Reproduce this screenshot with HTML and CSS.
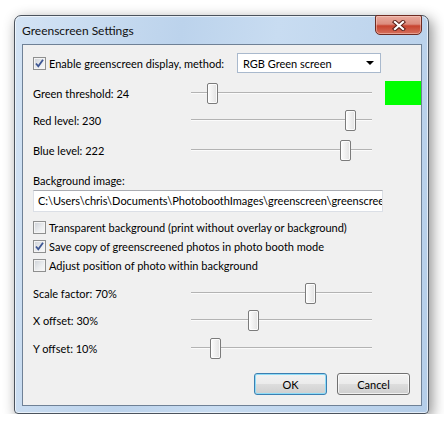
FILE: index.html
```html
<!DOCTYPE html>
<html lang="en">
<head>
    <meta charset="UTF-8">
    <title>Greenscreen Settings</title>
    <link rel="stylesheet" href="styles.css">
</head>
<body>

    <div class="window">
        <div class="titlebar">
            <span class="title">Greenscreen Settings</span>
            <span class="close-btn">
                <svg width="14" height="11" viewBox="0 0 14 11">
                    <path d="M3 2 L11 9 M11 2 L3 9" stroke="#5a2019" stroke-width="4.2" stroke-linecap="square" fill="none"/>
                    <path d="M3 2 L11 9 M11 2 L3 9" stroke="#ffffff" stroke-width="2.2" stroke-linecap="square" fill="none"/>
                </svg>
            </span>
        </div>

        <div class="client">
            <div class="method-row">
                <label class="check check-method">
                    <span class="box"><svg width="11" height="11" viewBox="0 0 11 11"><path d="M2 5.5 L4.3 8.3 L9 1.8" stroke="#3d5693" stroke-width="1.8" fill="none"/></svg></span>
                    Enable greenscreen display, method:
                </label>
                <div class="combo">
                    <span>RGB Green screen</span>
                    <span class="arrow"></span>
                </div>
            </div>

            <div class="slider-row row-green">
                <span>Green threshold: 24</span>
                <div class="track"><span class="thumb" style="left:16px"></span></div>
                <span></span>
                <span class="swatch"></span>
            </div>
            <div class="slider-row row-red">
                <span>Red level: 230</span>
                <div class="track"><span class="thumb" style="left:154px"></span></div>
            </div>
            <div class="slider-row row-blue">
                <span>Blue level: 222</span>
                <div class="track"><span class="thumb" style="left:149px"></span></div>
            </div>

            <div class="field-label">Background image:</div>
            <div class="field">C:\Users\chris\Documents\PhotoboothImages\greenscreen\greenscree</div>

            <label class="check check-row first">
                <span class="box"></span>
                Transparent background (print without overlay or background)
            </label>
            <label class="check check-row">
                <span class="box"><svg width="11" height="11" viewBox="0 0 11 11"><path d="M2 5.5 L4.3 8.3 L9 1.8" stroke="#3d5693" stroke-width="1.8" fill="none"/></svg></span>
                Save copy of greenscreened photos in photo booth mode
            </label>
            <label class="check check-row">
                <span class="box"></span>
                Adjust position of photo within background
            </label>

            <div class="slider-row row-scale">
                <span>Scale factor: 70%</span>
                <div class="track"><span class="thumb" style="left:114px"></span></div>
            </div>
            <div class="slider-row row-x">
                <span>X offset: 30%</span>
                <div class="track"><span class="thumb" style="left:57px"></span></div>
            </div>
            <div class="slider-row row-y">
                <span>Y offset: 10%</span>
                <div class="track"><span class="thumb" style="left:19px"></span></div>
            </div>

            <div class="buttons">
                <span class="btn btn-default">OK</span>
                <span class="btn">Cancel</span>
            </div>
        </div>
    </div>

</body>
</html>
```

FILE: styles.css
```css
* {
    box-sizing: border-box;
}
body {
    margin: 0;
    padding: 15px 0 0 14px;
    background: #ffffff;
    font-family: Lato, "Liberation Sans", sans-serif;
    font-size: 11px;
    color: #000;
}
.window {
    width: 415px;
    height: 399px;
    display: flex;
    flex-direction: column;
    padding: 0 6px 7px 7px;
    border: 1px solid #4b535d;
    border-radius: 7px 7px 4px 4px;
    background: linear-gradient(100deg, #d3e3f4 0%, #bcd3ec 35%, #c8dcf1 55%, #b5cee9 100%);
    box-shadow: 3px 4px 14px rgba(0, 0, 0, 0.45), inset 0 0 0 1px rgba(255, 255, 255, 0.6);
}
.titlebar {
    height: 28px;
    display: flex;
    align-items: flex-start;
}
.title {
    padding-top: 7px;
    line-height: 15px;
    font-size: 12px;
    color: #111;
}
.close-btn {
    margin-left: auto;
    margin-top: -1px;
    width: 47px;
    height: 20px;
    display: flex;
    align-items: center;
    justify-content: center;
    border: 1px solid #6d2b22;
    border-radius: 2px 2px 5px 5px;
    background: linear-gradient(#e9aa9d 0%, #dc8c7e 45%, #c7432f 55%, #d5705c 100%);
    box-shadow: inset 0 0 0 1px rgba(255, 220, 210, 0.45);
}
.client {
    flex: 1;
    padding: 8px 0 0 10px;
    border: 1px solid #6f8196;
    background: #f0f0f0;
}

/* checkboxes */
.check {
    display: flex;
    align-items: center;
}
.box {
    width: 13px;
    height: 13px;
    margin-right: 3px;
    display: flex;
    align-items: center;
    justify-content: center;
    border: 1px solid #8e8f8f;
    background: linear-gradient(135deg, #cdd1d7 0%, #eceef0 60%, #f8f8f8 100%);
    box-shadow: inset 0 0 0 1px #f4f4f4;
}
.method-row {
    height: 20px;
    display: flex;
    align-items: center;
}
.check-method {
    flex: 0 0 204px;
    white-space: nowrap;
}
.combo {
    width: 144px;
    height: 20px;
    display: flex;
    align-items: center;
    padding: 0 6px 0 5px;
    border: 1px solid #a9b9cd;
    background: #fff;
}
.arrow {
    margin-left: auto;
    border-left: 4px solid transparent;
    border-right: 4px solid transparent;
    border-top: 4px solid #000;
}

/* sliders */
.slider-row {
    display: grid;
    grid-template-columns: 158px 181px 13px 36px;
    align-items: center;
    height: 21px;
}
.row-green {
    height: 24px;
    margin-top: 8px;
}
.row-red {
    margin-top: 5px;
}
.row-blue {
    margin-top: 9px;
}
.row-scale {
    margin-top: 8px;
}
.row-x {
    margin-top: 6px;
}
.row-y {
    margin-top: 7px;
}
.track {
    position: relative;
    height: 21px;
}
.track::before {
    content: "";
    position: absolute;
    left: 0;
    right: 0;
    top: 9px;
    border-top: 1px solid #b3b3b3;
    border-bottom: 1px solid #fbfbfb;
}
.thumb {
    position: absolute;
    top: 0;
    width: 11px;
    height: 21px;
    border: 1px solid #7b7b7b;
    border-radius: 2px;
    background: linear-gradient(to right, #fdfdfd, #e2e2e2);
    box-shadow: inset 0 0 0 1px rgba(255, 255, 255, 0.8);
}
.swatch {
    height: 24px;
    background: #00ff00;
}

/* background image */
.field-label {
    margin-top: 12px;
    line-height: 15px;
}
.field {
    width: 350px;
    height: 22px;
    margin-top: 2px;
    padding-left: 4px;
    line-height: 20px;
    white-space: nowrap;
    overflow: hidden;
    border: 1px solid #dbdfe6;
    border-top-color: #abadb3;
    background: #fff;
}
.check-row {
    height: 19px;
}
.check-row.first {
    margin-top: 6px;
}

/* buttons */
.buttons {
    display: flex;
    justify-content: flex-end;
    gap: 10px;
    margin-top: 14px;
    padding-right: 11px;
}
.btn {
    width: 73px;
    height: 22px;
    display: flex;
    align-items: center;
    justify-content: center;
    border: 1px solid #707070;
    border-radius: 3px;
    background: linear-gradient(#f2f2f2 0%, #ebebeb 50%, #dddddd 51%, #cfcfcf 100%);
    box-shadow: inset 0 0 0 1px rgba(255, 255, 255, 0.7);
}
.btn-default {
    border-color: #3c7fb1;
    box-shadow: inset 0 0 0 1px #8fdcf7;
}
```
